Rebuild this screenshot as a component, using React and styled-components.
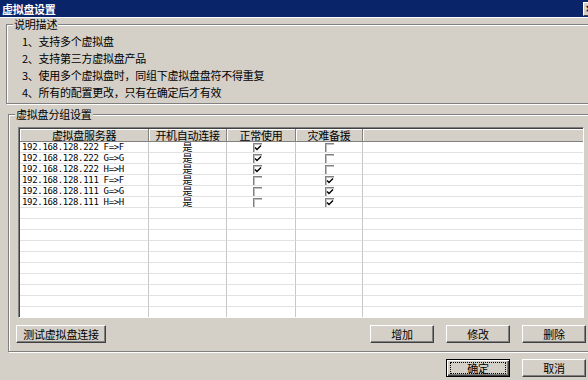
import React from 'react';
import styled, { createGlobalStyle } from 'styled-components';

const FONT = '"Noto Sans CJK SC", "DejaVu Sans", sans-serif';
const MONO = '"DejaVu Sans Mono", "Liberation Mono", monospace';
const FACE = '#d4d0c8';
const COLS = '129px 78px 69px 67px 1fr';

const Global = createGlobalStyle`
  html, body { margin: 0; padding: 0; overflow: hidden; background: ${FACE}; }
  body { font-family: ${FONT}; font-size: 11px; color: #000; }
`;

const Window = styled.div`
  width: 600px;
  height: 380px;
  background: ${FACE};
  display: flex;
  flex-direction: column;
`;

const TitleBar = styled.div`
  height: 17px;
  background: #0a246a;
  display: flex;
  align-items: center;
  justify-content: space-between;
  padding: 0 1px 0 2px;
  box-sizing: border-box;
`;

const Title = styled.span`
  color: #fff;
  font-weight: bold;
  font-size: 11px;
  line-height: 16px;
  letter-spacing: -0.3px;
`;

const CloseBtn = styled.span`
  width: 16px;
  height: 14px;
  box-sizing: border-box;
  background: ${FACE};
  border: 1px solid;
  border-color: #fff #404040 #404040 #fff;
  font: bold 10px/12px "DejaVu Sans", sans-serif;
  padding-left: 1px;
  text-align: left;
`;

const Body = styled.div`
  border-top: 1px solid #fff;
  display: flex;
  flex-direction: column;
`;

const Group = styled.fieldset`
  margin: ${p => p.$top}px 6px 0 ${p => p.$left}px;
  padding: ${p => p.$pad};
  border: 1px solid #808080;
  box-shadow: inset 1px 1px #fff, 1px 1px #fff;
  min-width: 0;
`;

const Legend = styled.legend`
  margin-left: ${p => p.$shift}px;
  padding: 0 1px;
  line-height: 13px;
  font-size: 11px;
  background: ${FACE};
  letter-spacing: -0.2px;
`;

const Item = styled.div`
  line-height: 17px;
  letter-spacing: -0.25px;
  white-space: nowrap;
`;

const TableFrame = styled.div`
  height: 191px;
  box-sizing: border-box;
  border: 1px solid;
  border-color: #808080 #fff #fff #808080;
  box-shadow: inset 1px 1px #404040;
  padding: 1px 0 0 1px;
  background: #fff;
  overflow: hidden;
`;

const HeaderRow = styled.div`
  display: grid;
  grid-template-columns: ${COLS};
  height: 13px;
`;

const HeaderCell = styled.div`
  box-sizing: border-box;
  background: ${FACE};
  border-right: ${p => (p.$blank ? 'none' : '1px solid #808080')};
  border-bottom: 1px solid #808080;
  box-shadow: inset 1px 1px #fff;
  font-size: 11px;
  line-height: 12px;
  text-align: center;
  letter-spacing: -0.3px;
  white-space: nowrap;
`;

const BodyRow = styled.div`
  display: grid;
  grid-template-columns: ${COLS};
  height: 11px;
`;

const Cell = styled.div`
  box-sizing: border-box;
  height: 11px;
  border-right: ${p => (p.$last ? 'none' : '1px solid #c8c8c8')};
  border-bottom: 1px solid #e2e2e2;
  display: flex;
  align-items: center;
  justify-content: ${p => (p.$left ? 'flex-start' : 'center')};
  padding: ${p => (p.$left ? '0 0 0 2px' : `0 ${p.$shiftR || 0}px 0 0`)};
  white-space: nowrap;
`;

const Addr = styled.span`
  font-family: ${MONO};
  font-size: 9px;
  letter-spacing: -0.32px;
  line-height: 10px;
`;

const Yes = styled.span`
  font-size: 10px;
  line-height: 10px;
`;

const Box = styled.span`
  width: 9px;
  height: 9px;
  box-sizing: border-box;
  border-top: 1px solid #808080;
  border-left: 1px solid #808080;
  box-shadow: inset 1px 1px #c0c0c0;
  background: #fff;
  display: inline-flex;
`;

const Check = ({ on }) => (
  <Box>
    {on && (
      <svg width="8" height="8" viewBox="0 0 8 8" style={{ display: 'block' }}>
        <path d="M1 3.5 L3 5.5 L7 1.5" fill="none" stroke="#000" strokeWidth="1.4" />
      </svg>
    )}
  </Box>
);

const ButtonRow = styled.div`
  display: flex;
  align-items: center;
  gap: 12px;
  margin: ${p => p.$mt}px ${p => p.$mr}px 0 ${p => p.$ml}px;
  justify-content: ${p => (p.$end ? 'flex-end' : 'flex-start')};
`;

const Spacer = styled.div`
  flex: 1;
`;

const Button = styled.button`
  width: ${p => p.$w}px;
  height: 18px;
  padding: 0;
  background: ${FACE};
  font-family: ${FONT};
  font-size: 11px;
  color: #000;
  letter-spacing: -0.2px;
  border: 1px solid;
  border-color: ${p => (p.$default ? '#000' : '#fff #404040 #404040 #fff')};
  box-shadow: ${p =>
    p.$default
      ? 'inset 1px 1px #fff, inset -1px -1px #404040, inset -2px -2px #808080'
      : 'inset -1px -1px #808080'};
  display: flex;
  align-items: center;
  justify-content: center;
`;

const Focus = styled.span`
  flex: 1;
  margin: 0 3px;
  height: 10px;
  border: 1px dotted #000;
  display: flex;
  align-items: center;
  justify-content: center;
  line-height: 10px;
`;

const rows = [
  ['192.168.128.222 F=>F', true, false],
  ['192.168.128.222 G=>G', true, false],
  ['192.168.128.222 H=>H', true, false],
  ['192.168.128.111 F=>F', false, true],
  ['192.168.128.111 G=>G', false, true],
  ['192.168.128.111 H=>H', false, true],
];

const emptyRows = Array.from({ length: 11 });

export default function App() {
  return (
    <>
      <Global />
      <Window>
        <TitleBar>
          <Title>虚拟盘设置</Title>
          <CloseBtn>×</CloseBtn>
        </TitleBar>
        <Body>
          <Group $top={0} $left={6} $pad="2px 0 2px 15px">
            <Legend $shift={-9}>说明描述</Legend>
            <Item>1、支持多个虚拟盘</Item>
            <Item>2、支持第三方虚拟盘产品</Item>
            <Item>3、使用多个虚拟盘时，同组下虚拟盘盘符不得重复</Item>
            <Item>4、所有的配置更改，只有在确定后才有效</Item>
          </Group>
          <Group $top={4} $left={8} $pad="6px 9px 8px 9px">
            <Legend $shift={-3}>虚拟盘分组设置</Legend>
            <TableFrame>
              <HeaderRow>
                <HeaderCell>虚拟盘服务器</HeaderCell>
                <HeaderCell>开机自动连接</HeaderCell>
                <HeaderCell>正常使用</HeaderCell>
                <HeaderCell>灾难备援</HeaderCell>
                <HeaderCell $blank />
              </HeaderRow>
              {rows.map(([addr, normal, backup]) => (
                <BodyRow key={addr}>
                  <Cell $left>
                    <Addr>{addr}</Addr>
                  </Cell>
                  <Cell>
                    <Yes>是</Yes>
                  </Cell>
                  <Cell $shiftR={8}>
                    <Check on={normal} />
                  </Cell>
                  <Cell>
                    <Check on={backup} />
                  </Cell>
                  <Cell $last />
                </BodyRow>
              ))}
              {emptyRows.map((_, i) => (
                <BodyRow key={i}>
                  <Cell />
                  <Cell />
                  <Cell />
                  <Cell />
                  <Cell $last />
                </BodyRow>
              ))}
            </TableFrame>
            <ButtonRow $mt={7} $ml={-2} $mr={-2}>
              <Button $w={90}>测试虚拟盘连接</Button>
              <Spacer />
              <Button $w={64}>增加</Button>
              <Button $w={64}>修改</Button>
              <Button $w={64}>删除</Button>
            </ButtonRow>
          </Group>
          <ButtonRow $mt={7} $ml={0} $mr={14} $end>
            <Button $w={64} $default>
              <Focus>确定</Focus>
            </Button>
            <Button $w={64}>取消</Button>
          </ButtonRow>
        </Body>
      </Window>
    </>
  );
}
